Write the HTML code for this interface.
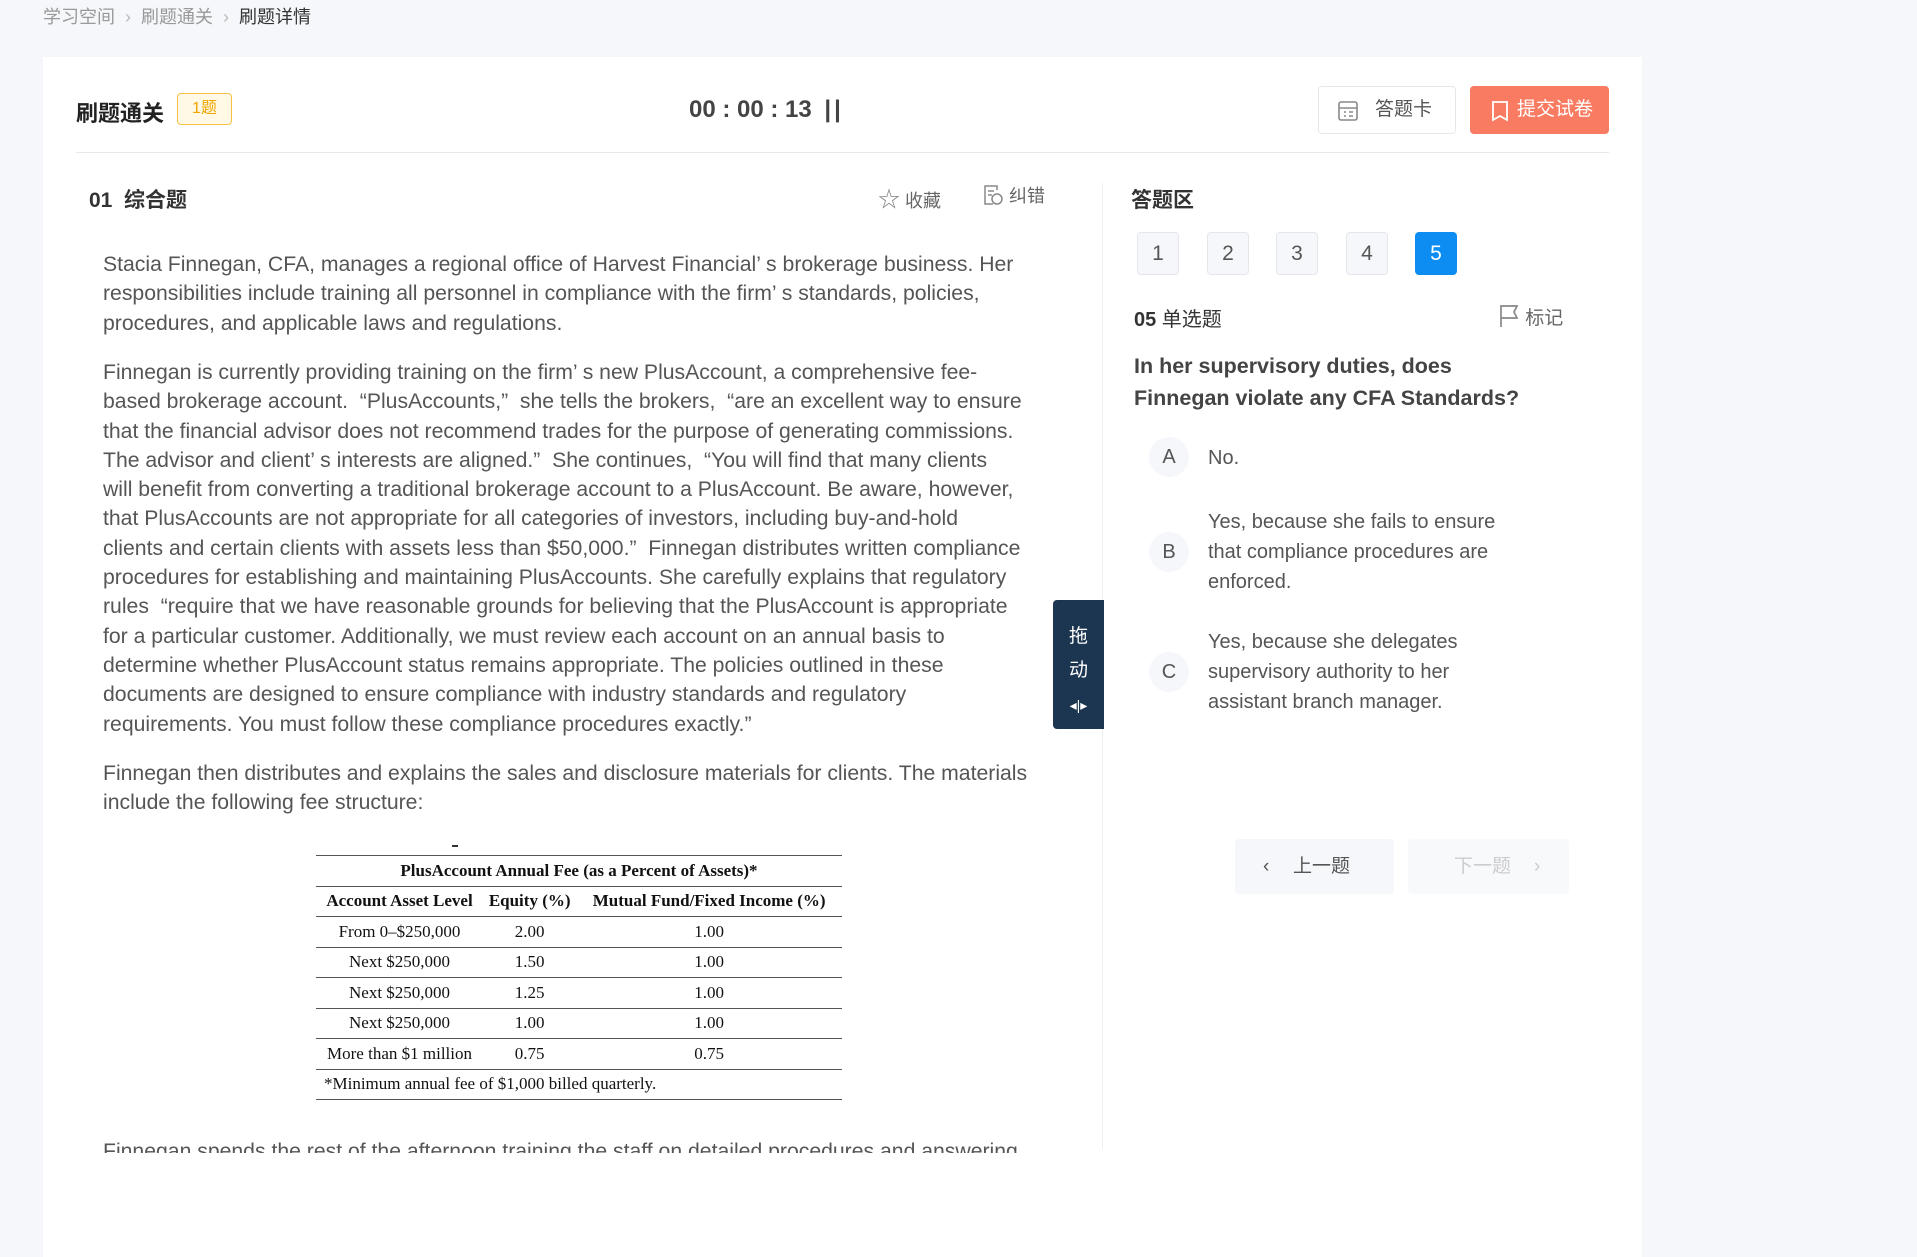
<!DOCTYPE html>
<html><head><meta charset="utf-8"><style>
*{margin:0;padding:0;box-sizing:border-box}
body{width:1917px;height:1239px;background:#f5f7fa;font-family:"Liberation Sans","Noto Sans CJK SC",sans-serif;color:#333;position:relative;overflow:hidden}
.a{position:absolute}
.crumb{left:43px;top:3px;font-size:18px;color:#999;white-space:nowrap}
.crumb b{font-weight:normal;color:#333}
.crumb i{font-style:normal;margin:0 10px;color:#bbb}
.card{left:43px;top:57px;width:1599px;height:1200px;background:#fff}
.p{font-size:21.2px;line-height:29.3px;color:#555;white-space:nowrap}
.num{width:42px;height:43px;border:1px solid #e4e7ec;background:#f5f7fa;border-radius:4px;font-size:21px;color:#555;text-align:center;line-height:41px}
.opt{font-size:20px;line-height:30px;color:#555;width:320px}
.circ{width:40px;height:40px;border-radius:50%;background:#f5f7fa;font-size:20px;color:#555;text-align:center;line-height:40px}
table{border-collapse:collapse;font-family:"Liberation Serif",serif;font-size:17px;color:#111}
td{height:30.5px;border-bottom:1.5px solid #555;text-align:center;padding:0}
</style></head><body>
<div class="a crumb">学习空间<i>›</i>刷题通关<i>›</i><b>刷题详情</b></div>
<div class="a card"></div>
<div class="a" style="left:76px;top:96px;font-size:22px;font-weight:bold;color:#222">刷题通关</div>
<div class="a" style="left:177px;top:93px;width:55px;height:32px;border:1px solid #f5c143;background:#fff9e6;border-radius:4px;color:#f0a500;font-size:16px;text-align:center;line-height:30px">1题</div>
<div class="a" style="left:689px;top:96px;font-size:24px;font-weight:bold;color:#444">00 : 00 : 13 <span style="letter-spacing:3px;margin-left:6px">||</span></div>
<div class="a" style="left:1318px;top:86px;width:138px;height:48px;border:1px solid #e4e7ec;border-radius:4px;font-size:19px;color:#555;line-height:46px;padding-left:56px">答题卡
<svg class="a" style="left:18px;top:13px" width="22" height="22" viewBox="0 0 22 22" fill="none" stroke="#888" stroke-width="1.6"><rect x="2" y="2" width="18" height="18" rx="2"/><path d="M2 8h18M7 12h2M12 12h4M7 16h2M12 16h4"/></svg></div>
<div class="a" style="left:1470px;top:86px;width:139px;height:48px;background:#f97b62;border-radius:4px;font-size:19px;color:#fff;line-height:48px;padding-left:47px">提交试卷
<svg class="a" style="left:20px;top:14px" width="20" height="22" viewBox="0 0 20 22" fill="none" stroke="#fff" stroke-width="1.8"><path d="M3 2h14v18l-7-4-7 4z"/></svg></div>
<div class="a" style="left:76px;top:152px;width:1533px;height:1px;background:#e8e8e8"></div>
<div class="a" style="left:89px;top:184px;font-size:21px;font-weight:bold;color:#333">01&nbsp;&nbsp;综合题</div>
<div class="a" style="left:878px;top:182px;font-size:18px;color:#666"><span style="font-size:22px;color:#888">☆</span> 收藏</div>
<div class="a" style="left:982px;top:182px;font-size:18px;color:#666"><svg width="22" height="22" viewBox="0 0 22 22" fill="none" stroke="#888" stroke-width="1.5" style="vertical-align:-4px"><path d="M15 6V2H3v18h8"/><circle cx="15" cy="15" r="5"/><path d="M6 7h6M6 11h4"/></svg> 纠错</div>
<div class="a" style="left:1102px;top:183px;width:1px;height:966px;background:#eee"></div>
<div class="a p" style="left:103px;top:250px">Stacia Finnegan, CFA, manages a regional office of Harvest Financial’ s brokerage business. Her<br>responsibilities include training all personnel in compliance with the firm’ s standards, policies,<br>procedures, and applicable laws and regulations.</div>
<div class="a p" style="left:103px;top:358px">Finnegan is currently providing training on the firm’ s new PlusAccount, a comprehensive fee-<br>based brokerage account. &nbsp;“PlusAccounts,” &nbsp;she tells the brokers, &nbsp;“are an excellent way to ensure<br>that the financial advisor does not recommend trades for the purpose of generating commissions.<br>The advisor and client’ s interests are aligned.” &nbsp;She continues, &nbsp;“You will find that many clients<br>will benefit from converting a traditional brokerage account to a PlusAccount. Be aware, however,<br>that PlusAccounts are not appropriate for all categories of investors, including buy-and-hold<br>clients and certain clients with assets less than $50,000.” &nbsp;Finnegan distributes written compliance<br>procedures for establishing and maintaining PlusAccounts. She carefully explains that regulatory<br>rules &nbsp;“require that we have reasonable grounds for believing that the PlusAccount is appropriate<br>for a particular customer. Additionally, we must review each account on an annual basis to<br>determine whether PlusAccount status remains appropriate. The policies outlined in these<br>documents are designed to ensure compliance with industry standards and regulatory<br>requirements. You must follow these compliance procedures exactly.”</div>
<div class="a p" style="left:103px;top:759px">Finnegan then distributes and explains the sales and disclosure materials for clients. The materials<br>include the following fee structure:</div>
<div class="a" style="left:452px;top:845px;width:6px;height:1.5px;background:#333"></div>
<table class="a" style="left:316px;top:855px;width:526px;border-top:1.5px solid #555">
<tr><td colspan="3" style="font-weight:bold">PlusAccount Annual Fee (as a Percent of Assets)*</td></tr>
<tr style="font-weight:bold"><td>Account Asset Level</td><td>Equity (%)</td><td>Mutual Fund/Fixed Income (%)</td></tr>
<tr><td>From 0–$250,000</td><td>2.00</td><td>1.00</td></tr>
<tr><td>Next $250,000</td><td>1.50</td><td>1.00</td></tr>
<tr><td>Next $250,000</td><td>1.25</td><td>1.00</td></tr>
<tr><td>Next $250,000</td><td>1.00</td><td>1.00</td></tr>
<tr><td>More than $1 million</td><td>0.75</td><td>0.75</td></tr>
<tr><td colspan="3" style="text-align:left;padding-left:8px">*Minimum annual fee of $1,000 billed quarterly.</td></tr>
</table>
<div class="a" style="left:103px;top:1137px;height:16px;overflow:hidden"><div class="p">Finnegan spends the rest of the afternoon training the staff on detailed procedures and answering</div></div>
<div class="a" style="left:1053px;top:600px;width:51px;height:129px;background:#1c3550;border-radius:4px 0 0 4px;color:#fff;font-size:19px;text-align:center;padding-top:20px;line-height:34px">拖<br>动<br><span style="font-size:14px;line-height:20px">◂|▸</span></div>
<div class="a" style="left:1131px;top:184px;font-size:21px;font-weight:bold;color:#333">答题区</div>
<div class="a num" style="left:1137px;top:232px">1</div>
<div class="a num" style="left:1207px;top:232px">2</div>
<div class="a num" style="left:1276px;top:232px">3</div>
<div class="a num" style="left:1346px;top:232px">4</div>
<div class="a num" style="left:1415px;top:232px;background:#0d8cf2;border-color:#0d8cf2;color:#fff">5</div>
<div class="a" style="left:1134px;top:303px;font-size:20px;color:#333"><b>05</b> 单选题</div>
<div class="a" style="left:1498px;top:303px;font-size:19px;color:#666"><svg width="22" height="24" viewBox="0 0 22 24" fill="none" stroke="#888" stroke-width="1.7" style="vertical-align:-4px"><path d="M3 23V2h16l-3 6 3 6H3"/></svg> 标记</div>
<div class="a" style="left:1134px;top:350px;font-size:21.5px;line-height:32px;font-weight:bold;color:#444;width:420px">In her supervisory duties, does<br>Finnegan violate any CFA Standards?</div>
<div class="a circ" style="left:1149px;top:437px">A</div>
<div class="a opt" style="left:1208px;top:443px">No.</div>
<div class="a circ" style="left:1149px;top:532px">B</div>
<div class="a opt" style="left:1208px;top:507px">Yes, because she fails to ensure that compliance procedures are enforced.</div>
<div class="a circ" style="left:1149px;top:652px">C</div>
<div class="a opt" style="left:1208px;top:627px">Yes, because she delegates supervisory authority to her assistant branch manager.</div>
<div class="a" style="left:1235px;top:839px;width:159px;height:55px;background:#f5f7fa;border-radius:4px;font-size:19px;color:#555;line-height:55px;padding-left:58px"><span class="a" style="left:28px">‹</span>上一题</div>
<div class="a" style="left:1408px;top:839px;width:161px;height:55px;background:#f8f9fb;border-radius:4px;font-size:19px;color:#ccc;line-height:55px;padding-left:46px">下一题<span class="a" style="left:126px">›</span></div>
</body></html>
